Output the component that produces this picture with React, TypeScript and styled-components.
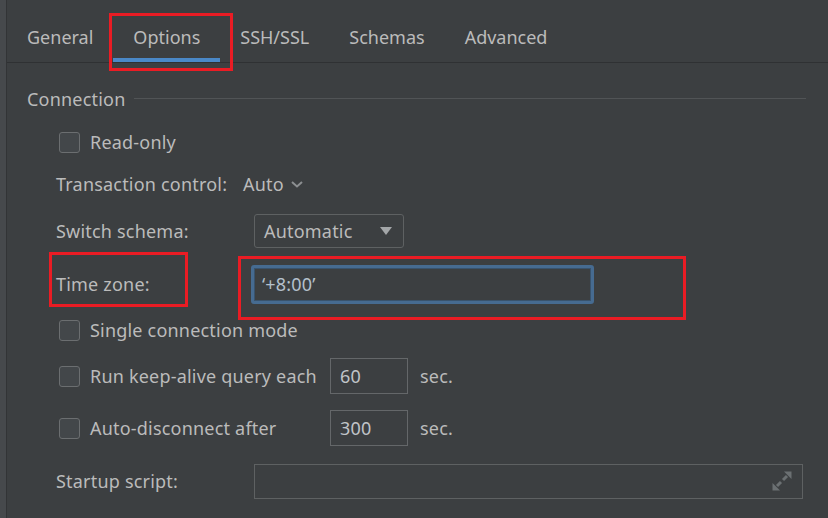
import React from "react";
import styled, { createGlobalStyle } from "styled-components";

const GlobalStyle = createGlobalStyle`
  html, body { margin: 0; padding: 0; background: #3c3f41; }
  * { box-sizing: border-box; }
`;

const Window = styled.div`
  position: relative;
  width: 828px;
  height: 518px;
  display: flex;
  background: #3c3f41;
  overflow: hidden;
  font-family: "Noto Sans", "Open Sans", sans-serif;
  font-size: 18px;
  letter-spacing: 0.2px;
  color: #bbbbbb;
`;

const SideStrip = styled.div`
  width: 7px;
  flex: none;
  background: #46494c;
  border-right: 1px solid #323436;
`;

const Main = styled.div`
  flex: 1;
  display: flex;
  flex-direction: column;
`;

const TabBar = styled.div`
  height: 63px;
  flex: none;
  display: flex;
  border-bottom: 1px solid #2f3133;
`;

const Tab = styled.div<{ $active?: boolean }>`
  position: relative;
  display: flex;
  align-items: center;
  padding: 12px 20px 0;
  font-size: 18px;
  letter-spacing: 0;
  color: #bbbbbb;
  &::after {
    content: "";
    display: ${(p) => (p.$active ? "block" : "none")};
    position: absolute;
    left: 0;
    right: 0;
    bottom: 0;
    height: 4px;
    background: #4a88c7;
  }
`;

const Content = styled.div`
  padding: 18px 22px 0 20px;
  display: flex;
  flex-direction: column;
`;

const SectionHeader = styled.div`
  height: 36px;
  display: flex;
  align-items: center;
  gap: 9px;
`;

const SectionLine = styled.div`
  flex: 1;
  height: 1px;
  margin-top: -2px;
  background: #515456;
`;

const Row = styled.div<{ $mt: number }>`
  height: 36px;
  margin-top: ${(p) => p.$mt}px;
  padding-left: 29px;
  display: flex;
  align-items: center;
  white-space: nowrap;
`;

const Label = styled.div<{ $w?: number }>`
  width: ${(p) => (p.$w ? `${p.$w}px` : "auto")};
  flex: none;
`;

const CheckLabel = styled.label<{ $w?: number }>`
  display: flex;
  align-items: center;
  gap: 10px;
  padding-left: 3px;
  width: ${(p) => (p.$w ? `${p.$w}px` : "auto")};
  flex: none;
`;

const CheckBox = styled.span`
  width: 21px;
  height: 21px;
  border: 1px solid #6b6e70;
  border-radius: 3px;
  background: #43474a;
  flex: none;
`;

const InlineSelect = styled.div`
  display: flex;
  align-items: center;
  gap: 7px;
`;

const Dropdown = styled.div`
  width: 150px;
  height: 34px;
  border: 1px solid #5e6162;
  border-radius: 3px;
  display: flex;
  align-items: center;
  justify-content: space-between;
  padding: 0 11px 0 9px;
`;

const Triangle = styled.span`
  width: 0;
  height: 0;
  border-left: 6px solid transparent;
  border-right: 6px solid transparent;
  border-top: 8px solid #a3a6a8;
`;

const FocusField = styled.div`
  width: 343px;
  height: 39px;
  border: 3px solid #466b91;
  border-radius: 3px;
  box-shadow: inset 0 0 0 1px #39536d;
  display: flex;
  align-items: center;
  padding-left: 8px;
  color: #b4c0cc;
`;

const NumberField = styled.div`
  width: 78px;
  height: 36px;
  border: 1px solid #646769;
  display: flex;
  align-items: center;
  padding-left: 9px;
  color: #c0c4c8;
`;

const Unit = styled.span`
  margin-left: 12px;
`;

const ScriptField = styled.div`
  width: 549px;
  height: 35px;
  border: 1px solid #5e6162;
  display: flex;
  align-items: center;
  justify-content: flex-end;
  padding-right: 10px;
`;

const Annotation = styled.div<{ $x: number; $y: number; $w: number; $h: number }>`
  position: absolute;
  left: ${(p) => p.$x}px;
  top: ${(p) => p.$y}px;
  width: ${(p) => p.$w}px;
  height: ${(p) => p.$h}px;
  border: 3px solid #ea1c24;
  pointer-events: none;
`;

const Chevron = () => (
  <svg width="12" height="7" viewBox="0 0 12 7">
    <path d="M1 1 L6 5.5 L11 1" fill="none" stroke="#8c8f91" strokeWidth="2" />
  </svg>
);

const ExpandIcon = () => (
  <svg width="20" height="20" viewBox="0 0 20 20">
    <g fill="#6b7072" stroke="#6b7072">
      <path d="M19.5 0.5 L19.5 8 L12 0.5 Z" strokeWidth="0" />
      <path d="M15 5 L11 9" strokeWidth="3" />
      <path d="M0.5 19.5 L0.5 12 L8 19.5 Z" strokeWidth="0" />
      <path d="M5 15 L9 11" strokeWidth="3" />
    </g>
  </svg>
);

export default function App() {
  return (
    <Window>
      <GlobalStyle />
      <SideStrip />
      <Main>
        <TabBar>
          <Tab>General</Tab>
          <Tab $active>Options</Tab>
          <Tab>SSH/SSL</Tab>
          <Tab>Schemas</Tab>
          <Tab>Advanced</Tab>
        </TabBar>
        <Content>
          <SectionHeader>
            <span>Connection</span>
            <SectionLine />
          </SectionHeader>
          <Row $mt={7}>
            <CheckLabel>
              <CheckBox />
              Read-only
            </CheckLabel>
          </Row>
          <Row $mt={6}>
            <Label $w={187}>Transaction control:</Label>
            <InlineSelect>
              Auto <Chevron />
            </InlineSelect>
          </Row>
          <Row $mt={11}>
            <Label $w={198}>Switch schema:</Label>
            <Dropdown>
              Automatic <Triangle />
            </Dropdown>
          </Row>
          <Row $mt={17}>
            <Label $w={195}>Time zone:</Label>
            <FocusField>‘+8:00’</FocusField>
          </Row>
          <Row $mt={10}>
            <CheckLabel>
              <CheckBox />
              Single connection mode
            </CheckLabel>
          </Row>
          <Row $mt={10}>
            <CheckLabel $w={274}>
              <CheckBox />
              Run keep-alive query each
            </CheckLabel>
            <NumberField>60</NumberField>
            <Unit>sec.</Unit>
          </Row>
          <Row $mt={16}>
            <CheckLabel $w={274}>
              <CheckBox />
              Auto-disconnect after
            </CheckLabel>
            <NumberField>300</NumberField>
            <Unit>sec.</Unit>
          </Row>
          <Row $mt={17}>
            <Label $w={198}>Startup script:</Label>
            <ScriptField>
              <ExpandIcon />
            </ScriptField>
          </Row>
        </Content>
      </Main>
      <Annotation $x={109} $y={13} $w={124} $h={58} />
      <Annotation $x={49} $y={252} $w={139} $h={55} />
      <Annotation $x={238} $y={256} $w={448} $h={64} />
    </Window>
  );
}
